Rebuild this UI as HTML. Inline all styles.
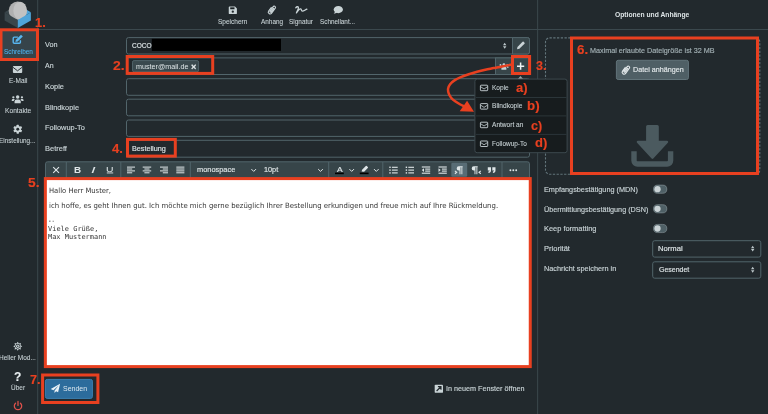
<!DOCTYPE html>
<html lang="de">
<head>
<meta charset="utf-8">
<title>Nachricht schreiben</title>
<style>
*{box-sizing:border-box;margin:0;padding:0}
html,body{width:768px;height:414px;overflow:hidden;background:#22292d}
body{position:relative;font-family:'Liberation Sans',Arial,sans-serif;color:#c9d3d6}
#art{position:absolute;left:0;top:0;width:768px;height:414px}
.t{position:absolute;white-space:nowrap;transform-origin:0 50%;-webkit-text-stroke:0.16px}
#txt{position:absolute;left:0;top:0;width:768px;height:414px;will-change:transform}
</style>
</head>
<body>
<svg id="art" width="768" height="414" viewBox="0 0 768 414">
<rect x="37.2" y="0" width="1" height="414" fill="#3b484d"/>
<rect x="537.15" y="0" width="1" height="414" fill="#3b484d"/>
<rect x="38" y="29" width="730" height="1" fill="#3b484d"/>
<rect x="0" y="30" width="37.2" height="30" fill="#36444a"/>
<polygon points="4.6,12.2 17.75,4.6 17.75,20" fill="#3a464b"/><polygon points="30.9,12.2 17.75,4.6 17.75,20" fill="#4fa4d9"/>
<circle cx="17.75" cy="10.7" r="9.1" fill="#b0b0b0"/>
<ellipse cx="20.1" cy="10.7" rx="6.75" ry="9.05" fill="#c2c2c2"/>
<polygon points="4.6,12.2 17.75,20 17.75,28 4.6,20.4" fill="#3a464b"/>
<polygon points="30.9,12.2 17.75,20 17.75,28 30.9,20.4" fill="#4fa4d9"/>
<path d="M17.9 37.1H14.3a1.1 1.1 0 0 0-1.1 1.1v4a1.1 1.1 0 0 0 1.1 1.1h5a1.1 1.1 0 0 0 1.1-1.1v-1.9" fill="none" stroke="#58b6ef" stroke-width="1.4"/>
<path d="M15.4 42.1l.5-2.3 5.1-5.1 1.8 1.8-5.1 5.1z" fill="#58b6ef"/>
<rect x="12.9" y="66.0" width="9.3" height="7.0" rx="0.9" fill="#c9d3d6"/>
<path d="M12.7 67.1L17.55 70.8 22.4 67.1" fill="none" stroke="#22292d" stroke-width="0.95"/>
<g transform="translate(17.65,99.2) scale(1.0)" fill="#c9d3d6"><circle cx="0" cy="-2.3" r="1.75"/><path d="M-3.1 4V2.4a2.2 2.2 0 0 1 2.2-2.2h1.8a2.2 2.2 0 0 1 2.2 2.2V4z"/><circle cx="-4.3" cy="-1.9" r="1.15"/><circle cx="4.3" cy="-1.9" r="1.15"/><path d="M-5.9 1.7V1.1a1.3 1.3 0 0 1 1.3-1.3h.9a1.3 1.3 0 0 1 .9.4 3 3 0 0 0-1.2 1.5z"/><path d="M5.9 1.7V1.1a1.3 1.3 0 0 0-1.3-1.3h-.9a1.3 1.3 0 0 0-.9.4 3 3 0 0 1 1.2 1.5z"/></g>
<g transform="translate(17.75,129.25)" fill="#c9d3d6"><circle r="3.25"/><rect x="-1.15" y="-4.5" width="2.3" height="9" rx="0.4" transform="rotate(0)"/><rect x="-1.15" y="-4.5" width="2.3" height="9" rx="0.4" transform="rotate(60)"/><rect x="-1.15" y="-4.5" width="2.3" height="9" rx="0.4" transform="rotate(120)"/><circle r="1.45" fill="#22292d"/></g>
<polygon points="17.75,341.80 18.86,343.62 20.93,343.12 20.43,345.19 22.25,346.30 20.43,347.41 20.93,349.48 18.86,348.98 17.75,350.80 16.64,348.98 14.57,349.48 15.07,347.41 13.25,346.30 15.07,345.19 14.57,343.12 16.64,343.62" fill="#c9d3d6"/>
<circle cx="17.75" cy="346.3" r="2.45" fill="#22292d"/><circle cx="17.75" cy="346.3" r="1.75" fill="#c9d3d6"/><circle cx="17.75" cy="346.3" r="0.7" fill="#22292d"/>
<path d="M15.6 403.2a3.7 3.7 0 1 0 4.8 0M18 401.4v4" fill="none" stroke="#e0524c" stroke-width="1.25" stroke-linecap="round"/>
<path d="M229.6 6.5h5.4l1.9 1.9v4.8a.85.85 0 0 1-.85.85h-6.45a.85.85 0 0 1-.85-.85V7.35a.85.85 0 0 1 .85-.85z" fill="#c9d3d6"/>
<rect x="230.2" y="7.35" width="4.3" height="1.9" fill="#1a2023"/><circle cx="232.8" cy="11.7" r="1.15" fill="#22292d"/>
<g transform="translate(271.9,9.65) rotate(36) scale(0.97)" fill="none" stroke="#c9d3d6" stroke-width="1.15" stroke-linecap="round"><path d="M-1.9 -1.4V3.1a1.9 1.9 0 0 0 3.8 0V-3.3a1.3 1.3 0 0 0-2.6 0V2.3a.65 .65 0 0 0 1.3 0V-2.1"/></g>
<path d="M295.8 7.7C296.8 6.6 298 6.4 298.4 7.3C298.9 8.7 297 11.4 296.4 12.9C297.6 11 299.6 8.6 300.7 8.8C301.7 9 301 11.2 302.3 11.2C303.8 11.2 305.4 9.8 306.9 9.2" fill="none" stroke="#c9d3d6" stroke-width="1.3" stroke-linecap="round" stroke-linejoin="round"/>
<ellipse cx="338.3" cy="9.55" rx="4.6" ry="3.6" fill="#c9d3d6"/><path d="M335 11.3c-.2 1-.7 1.9-1.3 2.5c1.4 0 2.6-.5 3.5-1.2z" fill="#c9d3d6"/>
<rect x="126.50" y="37.60" width="403.00" height="16.40" rx="2" fill="#22292d" stroke="#52656b" stroke-width="1"/>
<path d="M512.5 37.6h15a2 2 0 0 1 2 2v12.399999999999999a2 2 0 0 1-2 2h-15z" fill="#374549" stroke="#52656b"/>
<rect x="151.8" y="38.8" width="129.2" height="12.1" fill="#000"/>
<path d="M503.0 45.25h3.4l-1.7-2.5zM503.0 46.150000000000006h3.4l-1.7 2.5z" fill="#bcc7ca"/>
<path d="M517 49.2l.45-2.3 5.1-5.1a.8.8 0 0 1 1.1 0l.85.85a.8.8 0 0 1 0 1.1l-5.1 5.1z" fill="#c9d3d6"/>
<rect x="126.50" y="57.90" width="403.00" height="16.60" rx="2" fill="#22292d" stroke="#52656b" stroke-width="1"/>
<rect x="495.5" y="57.9" width="17" height="16.6" fill="#374549" stroke="#52656b"/>
<path d="M512.5 57.9h15a2 2 0 0 1 2 2v12.600000000000001a2 2 0 0 1-2 2h-15z" fill="#374549" stroke="#52656b"/>
<g transform="translate(503.9,66.5) scale(0.8)" fill="#c9d3d6"><circle cx="0" cy="-2.3" r="1.75"/><path d="M-3.1 4V2.4a2.2 2.2 0 0 1 2.2-2.2h1.8a2.2 2.2 0 0 1 2.2 2.2V4z"/><circle cx="-4.3" cy="-1.9" r="1.15"/><circle cx="4.3" cy="-1.9" r="1.15"/><path d="M-5.9 1.7V1.1a1.3 1.3 0 0 1 1.3-1.3h.9a1.3 1.3 0 0 1 .9.4 3 3 0 0 0-1.2 1.5z"/><path d="M5.9 1.7V1.1a1.3 1.3 0 0 0-1.3-1.3h-.9a1.3 1.3 0 0 0-.9.4 3 3 0 0 1 1.2 1.5z"/></g>
<path d="M520.6 62.6v7.2M517 66.2h7.2" stroke="#eef2f3" stroke-width="1.5" fill="none"/>
<rect x="132.50" y="60.60" width="66.10" height="11.20" rx="1.6" fill="#3a494e" stroke="#4f6268" stroke-width="1"/>
<rect x="126.50" y="78.70" width="403.00" height="16.60" rx="2" fill="#22292d" stroke="#52656b" stroke-width="1"/>
<rect x="126.50" y="99.20" width="403.00" height="16.60" rx="2" fill="#22292d" stroke="#52656b" stroke-width="1"/>
<rect x="126.50" y="120.00" width="403.00" height="16.40" rx="2" fill="#22292d" stroke="#52656b" stroke-width="1"/>
<rect x="126.50" y="140.30" width="403.00" height="16.90" rx="2" fill="#22292d" stroke="#52656b" stroke-width="1"/>
<path d="M45.5 179V163.8a2 2 0 0 1 2-2h480a2 2 0 0 1 2 2V179z" fill="#374549" stroke="#52656b"/>
<rect x="46" y="178.5" width="484" height="188" fill="#fff"/>
<rect x="65.8" y="162" width="1" height="16" fill="#52656b"/>
<rect x="120.3" y="162" width="1" height="16" fill="#52656b"/>
<rect x="189.8" y="162" width="1" height="16" fill="#52656b"/>
<rect x="328.2" y="162" width="1" height="16" fill="#52656b"/>
<rect x="382.3" y="162" width="1" height="16" fill="#52656b"/>
<rect x="501.5" y="162" width="1" height="16" fill="#52656b"/>
<path d="M53.2 167.1l5.8 5.8M59 167.1l-5.8 5.8" stroke="#dfe6e8" stroke-width="1.1" fill="none"/>
<rect x="106.8" y="172.5" width="6.4" height="0.9" fill="#dfe6e8"/>
<rect x="127.00" y="166.60" width="8.00" height="1.0" fill="#dfe6e8"/><rect x="127.00" y="168.50" width="5.20" height="1.0" fill="#dfe6e8"/><rect x="127.00" y="170.40" width="8.00" height="1.0" fill="#dfe6e8"/><rect x="127.00" y="172.30" width="5.20" height="1.0" fill="#dfe6e8"/>
<rect x="142.70" y="166.60" width="8.50" height="1.0" fill="#dfe6e8"/><rect x="144.40" y="168.50" width="5.10" height="1.0" fill="#dfe6e8"/><rect x="142.70" y="170.40" width="8.50" height="1.0" fill="#dfe6e8"/><rect x="144.40" y="172.30" width="5.10" height="1.0" fill="#dfe6e8"/>
<rect x="160.00" y="166.60" width="8.00" height="1.0" fill="#dfe6e8"/><rect x="162.80" y="168.50" width="5.20" height="1.0" fill="#dfe6e8"/><rect x="160.00" y="170.40" width="8.00" height="1.0" fill="#dfe6e8"/><rect x="162.80" y="172.30" width="5.20" height="1.0" fill="#dfe6e8"/>
<rect x="176.30" y="166.60" width="8.10" height="1.0" fill="#dfe6e8"/><rect x="176.30" y="168.50" width="8.10" height="1.0" fill="#dfe6e8"/><rect x="176.30" y="170.40" width="8.10" height="1.0" fill="#dfe6e8"/><rect x="176.30" y="172.30" width="8.10" height="1.0" fill="#dfe6e8"/>
<path d="M251.39999999999998 169.1l2.3 2.3 2.3-2.3" fill="none" stroke="#dfe6e8" stroke-width="1"/>
<path d="M318.2 169.1l2.3 2.3 2.3-2.3" fill="none" stroke="#dfe6e8" stroke-width="1"/>
<path d="M349.4 169.1l2.3 2.3 2.3-2.3" fill="none" stroke="#dfe6e8" stroke-width="1"/>
<path d="M374.0 169.1l2.3 2.3 2.3-2.3" fill="none" stroke="#dfe6e8" stroke-width="1"/>
<rect x="335" y="172.6" width="8.8" height="1.6" fill="#000"/>
<rect x="359.8" y="172.6" width="8.8" height="1.6" fill="#000"/>
<path d="M361.6 171.6l.5-1.9 3.7-3.7a.7.7 0 0 1 1 0l1 1a.7.7 0 0 1 0 1l-3.7 3.7z" fill="#dfe6e8"/>
<rect x="391.90000000000003" y="166.75" width="5.799999999999978" height="1.1" fill="#dfe6e8"/><rect x="389.3" y="166.60000000000002" width="1.4" height="1.4" fill="#dfe6e8"/><rect x="391.90000000000003" y="169.54999999999998" width="5.799999999999978" height="1.1" fill="#dfe6e8"/><rect x="389.3" y="169.4" width="1.4" height="1.4" fill="#dfe6e8"/><rect x="391.90000000000003" y="172.35" width="5.799999999999978" height="1.1" fill="#dfe6e8"/><rect x="389.3" y="172.20000000000002" width="1.4" height="1.4" fill="#dfe6e8"/>
<rect x="408.3" y="166.75" width="5.700000000000012" height="1.1" fill="#dfe6e8"/><rect x="405.7" y="166.60000000000002" width="1.4" height="1.4" fill="#dfe6e8"/><rect x="408.3" y="169.54999999999998" width="5.700000000000012" height="1.1" fill="#dfe6e8"/><rect x="405.7" y="169.4" width="1.4" height="1.4" fill="#dfe6e8"/><rect x="408.3" y="172.35" width="5.700000000000012" height="1.1" fill="#dfe6e8"/><rect x="405.7" y="172.20000000000002" width="1.4" height="1.4" fill="#dfe6e8"/>
<rect x="421.8" y="166.45" width="8.399999999999977" height="1.1" fill="#dfe6e8"/><rect x="421.8" y="172.64999999999998" width="8.399999999999977" height="1.1" fill="#dfe6e8"/><rect x="425.2" y="168.54999999999998" width="4.999999999999977" height="1.1" fill="#dfe6e8"/><rect x="425.2" y="170.54999999999998" width="4.999999999999977" height="1.1" fill="#dfe6e8"/><path d="M424.0 168.3v3.6l-2.2-1.8z" fill="#dfe6e8"/>
<rect x="438.5" y="166.45" width="8.300000000000011" height="1.1" fill="#dfe6e8"/><rect x="438.5" y="172.64999999999998" width="8.300000000000011" height="1.1" fill="#dfe6e8"/><rect x="441.9" y="168.54999999999998" width="4.900000000000011" height="1.1" fill="#dfe6e8"/><rect x="441.9" y="170.54999999999998" width="4.900000000000011" height="1.1" fill="#dfe6e8"/><path d="M438.5 168.3v3.6l2.2-1.8z" fill="#dfe6e8"/>
<rect x="451.3" y="162.8" width="15.9" height="14" rx="1.3" fill="#586c75"/>
<path d="M462.70000000000005 166.3h-3.9a2.1 2.1 0 0 0 0 4.2h.7v3.7h.95v-6.9h.95v6.9h.95v-6.9h.35z" fill="#dfe6e8"/>
<path d="M454.9 170.9l1.8 1.4-1.8 1.4" fill="none" stroke="#dfe6e8" stroke-width="1.1"/>
<path d="M477.70000000000005 166.3h-3.9a2.1 2.1 0 0 0 0 4.2h.7v3.7h.95v-6.9h.95v6.9h.95v-6.9h.35z" fill="#dfe6e8"/>
<path d="M480.8 170.9l-1.8 1.4 1.8 1.4" fill="none" stroke="#dfe6e8" stroke-width="1.1"/>
<path d="M487.8 167.2h3.2v3.1a2.6 2.6 0 0 1-2.6 2.6v-1.3a1.3 1.3 0 0 0 1.2-1.2h-1.8z" fill="#dfe6e8"/>
<path d="M492.3 167.2h3.2v3.1a2.6 2.6 0 0 1-2.6 2.6v-1.3a1.3 1.3 0 0 0 1.2-1.2h-1.8z" fill="#dfe6e8"/>
<circle cx="510.4" cy="170.2" r="0.95" fill="#dfe6e8"/>
<circle cx="513.3" cy="170.2" r="0.95" fill="#dfe6e8"/>
<circle cx="516.2" cy="170.2" r="0.95" fill="#dfe6e8"/>
<rect x="45.4" y="379.4" width="47" height="19" rx="1.8" fill="#2c6c9c" stroke="#3a7fb0" stroke-width="1"/>
<path d="M60.1 383.7l-9.4 5.2 2.7 1.3 5.2-4.6-4.1 5.2v2.3l1.6-1.8 2 1z" fill="#e9f1f6"/>
<rect x="434.7" y="384.7" width="8.3" height="8.1" rx="0.9" fill="#c9d3d6"/>
<path d="M436.6 391l4-4M437.9 386.6h3.1v3.1" fill="none" stroke="#22292d" stroke-width="1.15"/>
<rect x="545.5" y="37.9" width="214.3" height="136.3" rx="4" fill="none" stroke="#62747a" stroke-width="1.1" stroke-dasharray="2.3 1.45"/>
<rect x="616.4" y="60.3" width="72" height="19.2" rx="1.8" fill="#4f5f65" stroke="#62747a" stroke-width="1"/>
<g transform="translate(625.9,69.7) rotate(36) scale(1.0)" fill="none" stroke="#e3e9eb" stroke-width="1.1" stroke-linecap="round"><path d="M-1.9 -1.4V3.1a1.9 1.9 0 0 0 3.8 0V-3.3a1.3 1.3 0 0 0-2.6 0V2.3a.65 .65 0 0 0 1.3 0V-2.1"/></g>
<path d="M647.6 125.1h9.7a1.5 1.5 0 0 1 1.5 1.5v14.2h8.2a1.2 1.2 0 0 1 .85 2.05l-14.55 15.6a1.2 1.2 0 0 1-1.7 0l-14.55-15.6a1.2 1.2 0 0 1 .85-2.05h8.2v-14.2a1.5 1.5 0 0 1 1.5-1.5z" fill="#4b5a5f"/>
<path d="M634 151.2v9.3a3.5 3.5 0 0 0 3.5 3.5h29.6a3.5 3.5 0 0 0 3.5-3.5v-9.3" fill="none" stroke="#4b5a5f" stroke-width="5.4"/>
<rect x="653.5" y="185.10" width="13.3" height="8.2" rx="4.1" fill="#4f6066" stroke="#8b999d" stroke-width="0.6"/>
<circle cx="657.5" cy="189.2" r="3.15" fill="#cad3d6"/>
<rect x="653.5" y="204.70" width="13.3" height="8.2" rx="4.1" fill="#4f6066" stroke="#8b999d" stroke-width="0.6"/>
<circle cx="657.5" cy="208.8" r="3.15" fill="#cad3d6"/>
<rect x="653.5" y="224.40" width="13.3" height="8.2" rx="4.1" fill="#4f6066" stroke="#8b999d" stroke-width="0.6"/>
<circle cx="657.5" cy="228.5" r="3.15" fill="#cad3d6"/>
<rect x="652.70" y="240.70" width="108.10" height="16.40" rx="2" fill="#22292d" stroke="#52656b" stroke-width="1"/>
<rect x="652.70" y="261.80" width="108.10" height="16.40" rx="2" fill="#22292d" stroke="#52656b" stroke-width="1"/>
<path d="M751.0 248.15h3.4l-1.7-2.5zM751.0 249.04999999999998h3.4l-1.7 2.5z" fill="#bcc7ca"/>
<path d="M751.0 269.25h3.4l-1.7-2.5zM751.0 270.15h3.4l-1.7 2.5z" fill="#bcc7ca"/>
<path d="M517.9 79l2.6-2.9 2.6 2.9z" fill="#98a4a8"/>
<rect x="474.9" y="79.1" width="92.2" height="73.6" rx="2.2" fill="#171c1e" stroke="#3d494e" stroke-width="1"/>
<rect x="475.8" y="97.0" width="90.8" height="1" fill="#2b3539"/>
<rect x="475.8" y="115.4" width="90.8" height="1" fill="#2b3539"/>
<rect x="475.8" y="133.9" width="90.8" height="1" fill="#2b3539"/>
<rect x="480.4" y="85.2" width="7.3" height="5.5" rx="0.7" fill="none" stroke="#c9d3d6" stroke-width="0.9"/>
<path d="M480.6 86.7l3.45 2.3 3.45-2.3" fill="none" stroke="#c9d3d6" stroke-width="0.8"/>
<rect x="480.4" y="103.6" width="7.3" height="5.5" rx="0.7" fill="none" stroke="#c9d3d6" stroke-width="0.9"/>
<path d="M480.6 105.1l3.45 2.3 3.45-2.3" fill="none" stroke="#c9d3d6" stroke-width="0.8"/>
<rect x="480.4" y="122.2" width="7.3" height="5.5" rx="0.7" fill="none" stroke="#c9d3d6" stroke-width="0.9"/>
<path d="M480.6 123.7l3.45 2.3 3.45-2.3" fill="none" stroke="#c9d3d6" stroke-width="0.8"/>
<rect x="480.4" y="141.0" width="7.3" height="5.5" rx="0.7" fill="none" stroke="#c9d3d6" stroke-width="0.9"/>
<path d="M480.6 142.5l3.45 2.3 3.45-2.3" fill="none" stroke="#c9d3d6" stroke-width="0.8"/>
<rect x="1.0" y="29.8" width="36.5" height="29.700000000000003" fill="none" stroke="#e84020" stroke-width="3"/>
<rect x="127.2" y="56.5" width="85.49999999999999" height="16.900000000000006" fill="none" stroke="#e84020" stroke-width="3"/>
<rect x="512.5" y="56.5" width="17.100000000000023" height="17" fill="none" stroke="#e84020" stroke-width="3"/>
<rect x="127.5" y="139.4" width="47.80000000000001" height="16.69999999999999" fill="none" stroke="#e84020" stroke-width="3"/>
<rect x="45.35" y="178.6" width="484.9" height="188.00000000000003" fill="none" stroke="#e84020" stroke-width="3"/>
<rect x="571.5" y="38.0" width="186" height="135.5" fill="none" stroke="#e84020" stroke-width="3"/>
<rect x="42.6" y="375.0" width="55.300000000000004" height="27.5" fill="none" stroke="#e84020" stroke-width="3"/>
<path d="M512 64.6C510.33 64.90 505.05 65.82 502 66.4C498.95 66.98 496.48 67.54 493.7 68.1C490.92 68.66 488.08 69.13 485.3 69.75C482.52 70.37 479.77 71.04 477 71.8C474.23 72.56 471.40 73.42 468.7 74.3C466.00 75.18 463.17 76.08 460.8 77.1C458.43 78.12 456.28 79.22 454.5 80.4C452.72 81.58 451.17 82.83 450.1 84.2C449.03 85.57 448.33 87.07 448.1 88.6C447.87 90.13 448.20 91.88 448.7 93.4C449.20 94.92 449.97 96.33 451.1 97.7C452.23 99.07 453.97 100.47 455.5 101.6C457.03 102.73 458.63 103.60 460.3 104.5C461.97 105.40 464.63 106.58 465.5 107" fill="none" stroke="#e84020" stroke-width="2.5"/>
<polygon points="474,111.8 467.1,100.8 459.7,111.3" fill="#e84020"/>
</svg>
<div id="txt">
<div class="t" style="left:4.00px;top:49.25px;font-family:'Liberation Sans',Arial,sans-serif;font-size:7.15px;line-height:7.15px;-webkit-text-stroke:0.08px;color:#4eb2ee;transform:scaleX(0.8984)">Schreiben</div>
<div class="t" style="left:9.00px;top:78.05px;font-family:'Liberation Sans',Arial,sans-serif;font-size:7.15px;line-height:7.15px;-webkit-text-stroke:0.08px;color:#c9d3d6;transform:scaleX(0.9091)">E-Mail</div>
<div class="t" style="left:5.00px;top:107.95px;font-family:'Liberation Sans',Arial,sans-serif;font-size:7.15px;line-height:7.15px;-webkit-text-stroke:0.08px;color:#c9d3d6;transform:scaleX(0.9321)">Kontakte</div>
<div class="t" style="left:-1.00px;top:137.95px;font-family:'Liberation Sans',Arial,sans-serif;font-size:7.15px;line-height:7.15px;-webkit-text-stroke:0.08px;color:#c9d3d6;transform:scaleX(0.8906)">Einstellung...</div>
<div class="t" style="left:-1.00px;top:354.95px;font-family:'Liberation Sans',Arial,sans-serif;font-size:7.15px;line-height:7.15px;-webkit-text-stroke:0.08px;color:#c9d3d6;transform:scaleX(0.9121)">Heller Mod...</div>
<div class="t" style="left:11.00px;top:385.25px;font-family:'Liberation Sans',Arial,sans-serif;font-size:7.15px;line-height:7.15px;-webkit-text-stroke:0.08px;color:#c9d3d6;transform:scaleX(0.9067)">Über</div>
<div class="t" style="left:218.00px;top:18.90px;font-family:'Liberation Sans',Arial,sans-serif;font-size:7.15px;line-height:7.15px;-webkit-text-stroke:0.08px;color:#c9d3d6;transform:scaleX(0.9127)">Speichern</div>
<div class="t" style="left:261.00px;top:18.90px;font-family:'Liberation Sans',Arial,sans-serif;font-size:7.15px;line-height:7.15px;-webkit-text-stroke:0.08px;color:#c9d3d6;transform:scaleX(0.8969)">Anhang</div>
<div class="t" style="left:289.00px;top:18.90px;font-family:'Liberation Sans',Arial,sans-serif;font-size:7.15px;line-height:7.15px;-webkit-text-stroke:0.08px;color:#c9d3d6;transform:scaleX(0.9029)">Signatur</div>
<div class="t" style="left:320.00px;top:18.90px;font-family:'Liberation Sans',Arial,sans-serif;font-size:7.15px;line-height:7.15px;-webkit-text-stroke:0.08px;color:#c9d3d6;transform:scaleX(0.8896)">Schnellant...</div>
<div class="t" style="left:615.00px;top:10.75px;font-family:'Liberation Sans',Arial,sans-serif;font-size:7.5px;line-height:7.5px;font-weight:bold;-webkit-text-stroke:0;color:#dde4e6;transform:scaleX(0.8988)">Optionen und Anhänge</div>
<div class="t" style="left:45.00px;top:40.73px;font-family:'Liberation Sans',Arial,sans-serif;font-size:8.0px;line-height:8.0px;color:#c9d3d6;transform:scaleX(0.9057)">Von</div>
<div class="t" style="left:45.00px;top:61.83px;font-family:'Liberation Sans',Arial,sans-serif;font-size:8.0px;line-height:8.0px;color:#c9d3d6;transform:scaleX(0.8757)">An</div>
<div class="t" style="left:45.00px;top:83.13px;font-family:'Liberation Sans',Arial,sans-serif;font-size:8.0px;line-height:8.0px;color:#c9d3d6;transform:scaleX(0.9247)">Kopie</div>
<div class="t" style="left:45.00px;top:103.93px;font-family:'Liberation Sans',Arial,sans-serif;font-size:8.0px;line-height:8.0px;color:#c9d3d6;transform:scaleX(0.9203)">Blindkopie</div>
<div class="t" style="left:45.00px;top:124.23px;font-family:'Liberation Sans',Arial,sans-serif;font-size:8.0px;line-height:8.0px;color:#c9d3d6;transform:scaleX(0.9262)">Followup-To</div>
<div class="t" style="left:45.00px;top:144.93px;font-family:'Liberation Sans',Arial,sans-serif;font-size:8.0px;line-height:8.0px;color:#c9d3d6;transform:scaleX(0.9363)">Betreff</div>
<div class="t" style="left:132.00px;top:42.20px;font-family:'Liberation Sans',Arial,sans-serif;font-size:7.8px;line-height:7.8px;color:#dde4e6;transform:scaleX(0.8400)">COCO</div>
<div class="t" style="left:136.00px;top:63.01px;font-family:'Liberation Sans',Arial,sans-serif;font-size:7.9px;line-height:7.9px;-webkit-text-stroke:0;color:#dde4e6;transform:scaleX(0.9110)">muster@mail.de</div>
<div class="t" style="left:132.00px;top:145.03px;font-family:'Liberation Sans',Arial,sans-serif;font-size:8.0px;line-height:8.0px;color:#dde4e6;transform:scaleX(0.9048)">Bestellung</div>
<div class="t" style="left:197.00px;top:165.80px;font-family:'Liberation Sans',Arial,sans-serif;font-size:7.8px;line-height:7.8px;color:#dde4e6;transform:scaleX(0.9494)">monospace</div>
<div class="t" style="left:264.00px;top:165.80px;font-family:'Liberation Sans',Arial,sans-serif;font-size:7.8px;line-height:7.8px;color:#dde4e6;transform:scaleX(0.9356)">10pt</div>
<div class="t" style="left:49.00px;top:186.82px;font-family:'DejaVu Sans',Verdana,sans-serif;font-size:7.3px;line-height:7.3px;-webkit-text-stroke:0;color:#363636;transform:scaleX(0.9338)">Hallo Herr Muster,</div>
<div class="t" style="left:49.00px;top:201.82px;font-family:'DejaVu Sans',Verdana,sans-serif;font-size:7.3px;line-height:7.3px;-webkit-text-stroke:0;color:#363636;transform:scaleX(0.9495)">ich hoffe, es geht Ihnen gut. Ich möchte mich gerne bezüglich Ihrer Bestellung erkundigen und freue mich auf Ihre Rückmeldung.</div>
<div class="t" style="left:48.00px;top:217.94px;font-family:'DejaVu Sans Mono','Liberation Mono',monospace;font-size:6.8px;line-height:6.8px;-webkit-text-stroke:0;color:#363636;transform:scaleX(0.8696)">--</div>
<div class="t" style="left:48.00px;top:225.94px;font-family:'DejaVu Sans Mono','Liberation Mono',monospace;font-size:6.8px;line-height:6.8px;-webkit-text-stroke:0;color:#363636;transform:scaleX(1.0265)">Viele Grüße,</div>
<div class="t" style="left:48.00px;top:234.04px;font-family:'DejaVu Sans Mono','Liberation Mono',monospace;font-size:6.8px;line-height:6.8px;-webkit-text-stroke:0;color:#363636;transform:scaleX(1.0212)">Max Mustermann</div>
<div class="t" style="left:63.00px;top:385.19px;font-family:'Liberation Sans',Arial,sans-serif;font-size:8.1px;line-height:8.1px;-webkit-text-stroke:0;color:#dce8f0;transform:scaleX(0.8630)">Senden</div>
<div class="t" style="left:446.00px;top:385.23px;font-family:'Liberation Sans',Arial,sans-serif;font-size:8.0px;line-height:8.0px;color:#c9d3d6;transform:scaleX(0.9015)">In neuem Fenster öffnen</div>
<div class="t" style="left:590.00px;top:46.80px;font-family:'Liberation Sans',Arial,sans-serif;font-size:7.8px;line-height:7.8px;color:#a3b1b5;transform:scaleX(0.9251)">Maximal erlaubte Dateigröße ist 32 MB</div>
<div class="t" style="left:633.00px;top:65.83px;font-family:'Liberation Sans',Arial,sans-serif;font-size:8.0px;line-height:8.0px;color:#e3e9eb;transform:scaleX(0.8959)">Datei anhängen</div>
<div class="t" style="left:544.00px;top:185.83px;font-family:'Liberation Sans',Arial,sans-serif;font-size:8.0px;line-height:8.0px;color:#c9d3d6;transform:scaleX(0.9108)">Empfangsbestätigung (MDN)</div>
<div class="t" style="left:544.00px;top:206.03px;font-family:'Liberation Sans',Arial,sans-serif;font-size:8.0px;line-height:8.0px;color:#c9d3d6;transform:scaleX(0.9059)">Übermittlungsbestätigung (DSN)</div>
<div class="t" style="left:544.00px;top:225.23px;font-family:'Liberation Sans',Arial,sans-serif;font-size:8.0px;line-height:8.0px;color:#c9d3d6;transform:scaleX(0.9285)">Keep formatting</div>
<div class="t" style="left:544.00px;top:245.13px;font-family:'Liberation Sans',Arial,sans-serif;font-size:8.0px;line-height:8.0px;color:#c9d3d6;transform:scaleX(0.9421)">Priorität</div>
<div class="t" style="left:544.00px;top:264.83px;font-family:'Liberation Sans',Arial,sans-serif;font-size:8.0px;line-height:8.0px;color:#c9d3d6;transform:scaleX(0.9128)">Nachricht speichern in</div>
<div class="t" style="left:658.00px;top:245.23px;font-family:'Liberation Sans',Arial,sans-serif;font-size:8.0px;line-height:8.0px;color:#dde4e6;transform:scaleX(0.9551)">Normal</div>
<div class="t" style="left:659.00px;top:266.13px;font-family:'Liberation Sans',Arial,sans-serif;font-size:8.0px;line-height:8.0px;color:#dde4e6;transform:scaleX(0.8730)">Gesendet</div>
<div class="t" style="left:492.00px;top:85.06px;font-family:'Liberation Sans',Arial,sans-serif;font-size:6.9px;line-height:6.9px;-webkit-text-stroke:0.08px;color:#c9d3d6;transform:scaleX(0.9493)">Kopie</div>
<div class="t" style="left:492.00px;top:103.26px;font-family:'Liberation Sans',Arial,sans-serif;font-size:6.9px;line-height:6.9px;-webkit-text-stroke:0.08px;color:#c9d3d6;transform:scaleX(0.9548)">Blindkopie</div>
<div class="t" style="left:492.00px;top:122.06px;font-family:'Liberation Sans',Arial,sans-serif;font-size:6.9px;line-height:6.9px;-webkit-text-stroke:0.08px;color:#c9d3d6;transform:scaleX(0.9538)">Antwort an</div>
<div class="t" style="left:492.00px;top:141.06px;font-family:'Liberation Sans',Arial,sans-serif;font-size:6.9px;line-height:6.9px;-webkit-text-stroke:0.08px;color:#c9d3d6;transform:scaleX(0.9370)">Followup-To</div>
<div class="t" style="left:35.00px;top:15.81px;font-family:'Liberation Sans',Arial,sans-serif;font-size:13.1px;line-height:13.1px;font-weight:bold;color:#e84020;transform:scaleX(0.9838)">1.</div>
<div class="t" style="left:113.00px;top:58.91px;font-family:'Liberation Sans',Arial,sans-serif;font-size:13.1px;line-height:13.1px;font-weight:bold;color:#e84020;transform:scaleX(1.0632)">2.</div>
<div class="t" style="left:536.00px;top:58.71px;font-family:'Liberation Sans',Arial,sans-serif;font-size:13.1px;line-height:13.1px;font-weight:bold;color:#e84020;transform:scaleX(0.9538)">3.</div>
<div class="t" style="left:112.00px;top:142.01px;font-family:'Liberation Sans',Arial,sans-serif;font-size:13.1px;line-height:13.1px;font-weight:bold;color:#e84020;transform:scaleX(0.9949)">4.</div>
<div class="t" style="left:28.00px;top:175.91px;font-family:'Liberation Sans',Arial,sans-serif;font-size:13.1px;line-height:13.1px;font-weight:bold;color:#e84020;transform:scaleX(1.0526)">5.</div>
<div class="t" style="left:577.00px;top:42.81px;font-family:'Liberation Sans',Arial,sans-serif;font-size:13.1px;line-height:13.1px;font-weight:bold;color:#e84020;transform:scaleX(1.0211)">6.</div>
<div class="t" style="left:30.00px;top:373.11px;font-family:'Liberation Sans',Arial,sans-serif;font-size:13.1px;line-height:13.1px;font-weight:bold;color:#e84020;transform:scaleX(0.9684)">7.</div>
<div class="t" style="left:516.00px;top:81.97px;font-family:'Liberation Sans',Arial,sans-serif;font-size:12.2px;line-height:12.2px;font-weight:bold;color:#e84020;transform:scaleX(1.0600)">a)</div>
<div class="t" style="left:527.00px;top:99.97px;font-family:'Liberation Sans',Arial,sans-serif;font-size:12.2px;line-height:12.2px;font-weight:bold;color:#e84020;transform:scaleX(1.0927)">b)</div>
<div class="t" style="left:531.00px;top:120.17px;font-family:'Liberation Sans',Arial,sans-serif;font-size:12.2px;line-height:12.2px;font-weight:bold;color:#e84020;transform:scaleX(1.0256)">c)</div>
<div class="t" style="left:535.00px;top:136.87px;font-family:'Liberation Sans',Arial,sans-serif;font-size:12.2px;line-height:12.2px;font-weight:bold;color:#e84020;transform:scaleX(1.0667)">d)</div>
<div class="t" style="left:14.00px;top:371.02px;font-family:'Liberation Sans',Arial,sans-serif;font-size:12.5px;line-height:12.5px;font-weight:bold;color:#e8eef0;transform:scaleX(0.9538)">?</div>
<div class="t" style="left:191.00px;top:61.96px;font-family:'Liberation Sans',Arial,sans-serif;font-size:9.5px;line-height:9.5px;font-weight:bold;color:#e8eef0;transform:scaleX(0.9556)">×</div>
<div class="t" style="left:74.00px;top:164.97px;font-family:'Liberation Sans',Arial,sans-serif;font-size:9.6px;line-height:9.6px;font-weight:bold;-webkit-text-stroke:0;color:#dfe6e8;transform:scaleX(1.0261)">B</div>
<div class="t" style="left:91.00px;top:164.97px;font-family:'Liberation Sans',Arial,sans-serif;font-size:9.6px;line-height:9.6px;font-style:italic;-webkit-text-stroke:0;color:#dfe6e8;transform:scaleX(1.7000)">I</div>
<div class="t" style="left:106.00px;top:166.10px;font-family:'Liberation Sans',Arial,sans-serif;font-size:7.8px;line-height:7.8px;-webkit-text-stroke:0;color:#dfe6e8;transform:scaleX(1.3333)">U</div>
<div class="t" style="left:337.00px;top:165.72px;font-family:'Liberation Sans',Arial,sans-serif;font-size:7.3px;line-height:7.3px;color:#dfe6e8;transform:scaleX(1.1579)">A</div>

</div>
</body>
</html>
